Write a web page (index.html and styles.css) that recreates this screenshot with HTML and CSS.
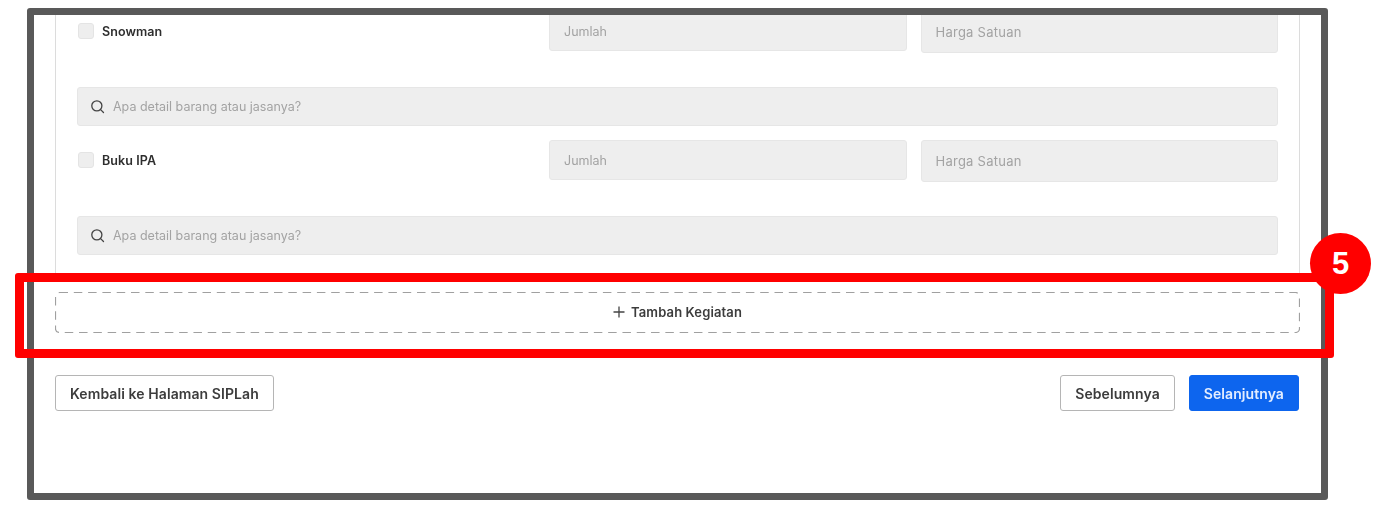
FILE: index.html
```html
<!DOCTYPE html>
<html lang="id">
<head>
<meta charset="utf-8">
<title>Tambah Kegiatan</title>
<link rel="stylesheet" href="styles.css">
</head>
<body>
<main class="frame">
  <section class="card">
    <div class="item-row">
      <label class="item-label"><span class="checkbox"></span>Snowman</label>
      <div class="field field-qty">Jumlah</div>
      <div class="field field-price">Harga Satuan</div>
    </div>
    <div class="search">
      <svg class="search-icon" viewBox="0 0 16 16" aria-hidden="true"><circle cx="7.3" cy="7.3" r="5.4"/><path d="M11.3 11.3 14.4 14.4"/></svg>
      Apa detail barang atau jasanya?
    </div>
    <div class="item-row">
      <label class="item-label"><span class="checkbox"></span>Buku IPA</label>
      <div class="field field-qty">Jumlah</div>
      <div class="field field-price">Harga Satuan</div>
    </div>
    <div class="search">
      <svg class="search-icon" viewBox="0 0 16 16" aria-hidden="true"><circle cx="7.3" cy="7.3" r="5.4"/><path d="M11.3 11.3 14.4 14.4"/></svg>
      Apa detail barang atau jasanya?
    </div>
  </section>
  <button class="add-activity" type="button">
    <svg class="dash-outline" aria-hidden="true"><rect class="dash-rect" rx="4" ry="4"/></svg>
    <svg class="plus-icon" viewBox="0 0 12 12" aria-hidden="true"><path d="M6 .5v11M.5 6h11"/></svg>
    Tambah Kegiatan
  </button>
  <footer class="actions">
    <button class="btn btn-outline" type="button">Kembali ke Halaman SIPLah</button>
    <div class="actions-right">
      <button class="btn btn-outline btn-prev" type="button">Sebelumnya</button>
      <button class="btn btn-primary" type="button">Selanjutnya</button>
    </div>
  </footer>
</main>
<div class="highlight"></div>
<div class="badge">5</div>
</body>
</html>
```
FILE: styles.css
```css
* { box-sizing: border-box; }
html, body { margin: 0; height: 100%; background: #fff; }
body {
  position: relative;
  width: 1383px;
  height: 517px;
  overflow: hidden;
  padding: 8px 0 0 27px;
  font-family: Inter, "Liberation Sans", sans-serif;
}
.frame {
  width: 1301px;
  height: 492px;
  border: 7px solid #595959;
  border-radius: 3px;
  padding: 0 21px;
  overflow: hidden;
  background: #fff;
}
.card {
  margin-top: -4px;
  height: 270px;
  padding: 0 21px;
  border: 1px solid #dcdcdc;
  border-top: 0;
  filter: blur(.3px);
}
.item-row {
  display: grid;
  grid-template-columns: 1fr 358px 357px;
  column-gap: 14px;
  align-items: start;
  margin-bottom: 34px;
}
.item-label {
  display: flex;
  align-items: center;
  gap: 8px;
  height: 40px;
  padding-left: 1px;
  font-size: 12.5px;
  font-weight: 600;
  letter-spacing: .08px;
  color: #2e2e2e;
}
.checkbox {
  width: 16px;
  height: 16px;
  border: 1px solid #e4e4e4;
  border-radius: 3px;
  background: #eee;
}
.field, .search {
  display: flex;
  align-items: center;
  background: #eee;
  border: 1px solid #e6e6e6;
  border-radius: 3px;
  color: #a3a3a3;
}
.field { height: 40px; padding-left: 14px; }
.field-qty { font-size: 12.5px; }
.field-price {
  height: 41.5px;
  padding-left: 13.5px;
  font-size: 13px;
  letter-spacing: .25px;
}
.search {
  height: 39.5px;
  margin-bottom: 14px;
  padding-left: 12px;
  font-size: 12.5px;
}
.search-icon {
  width: 15px;
  height: 15px;
  margin-right: 8px;
  fill: none;
  stroke: #444;
  stroke-width: 1.4;
  stroke-linecap: round;
}
.add-activity {
  position: relative;
  display: flex;
  align-items: center;
  justify-content: center;
  width: 100%;
  height: 41px;
  margin-top: 11px;
  padding: 0 0 2px;
  border: 0;
  background: transparent;
  font: 600 13px Inter, "Liberation Sans", sans-serif;
  letter-spacing: .12px;
  color: #3c3c3c;
  filter: blur(.3px);
}
.dash-outline { position: absolute; inset: 0; width: 100%; height: 100%; }
.dash-rect {
  x: .5px;
  y: .5px;
  width: calc(100% - 1px);
  height: calc(100% - 1px);
  fill: none;
  stroke: #a0a0a0;
  stroke-width: 1.2;
  stroke-dasharray: 8.5 5.8;
}
.plus-icon {
  width: 12px;
  height: 12px;
  margin-right: 6px;
  fill: none;
  stroke: #444;
  stroke-width: 1.3;
}
.actions {
  display: flex;
  justify-content: space-between;
  margin-top: 42px;
  padding-right: 1px;
  filter: blur(.3px);
}
.actions-right { display: flex; gap: 14px; }
.btn {
  height: 36px;
  padding: 0 14px;
  border-radius: 3px;
  font: 600 14px Inter, "Liberation Sans", sans-serif;
  letter-spacing: .08px;
}
.btn-outline { background: #fff; border: 1px solid #b5b5b5; color: #3c3c3c; }
.btn-primary { background: #0d65ee; border: 1px solid #0d65ee; color: #e4eeff; }
.highlight {
  position: absolute;
  left: 15px;
  top: 273px;
  width: 1319px;
  height: 85px;
  border: 9px solid #f00;
  border-radius: 3px;
}
.badge {
  position: absolute;
  left: 1310px;
  top: 233px;
  width: 61px;
  height: 61px;
  border-radius: 50%;
  background: #f00;
  color: #fff;
  font: 700 31px/61px "Liberation Sans", sans-serif;
  text-align: center;
}
```
